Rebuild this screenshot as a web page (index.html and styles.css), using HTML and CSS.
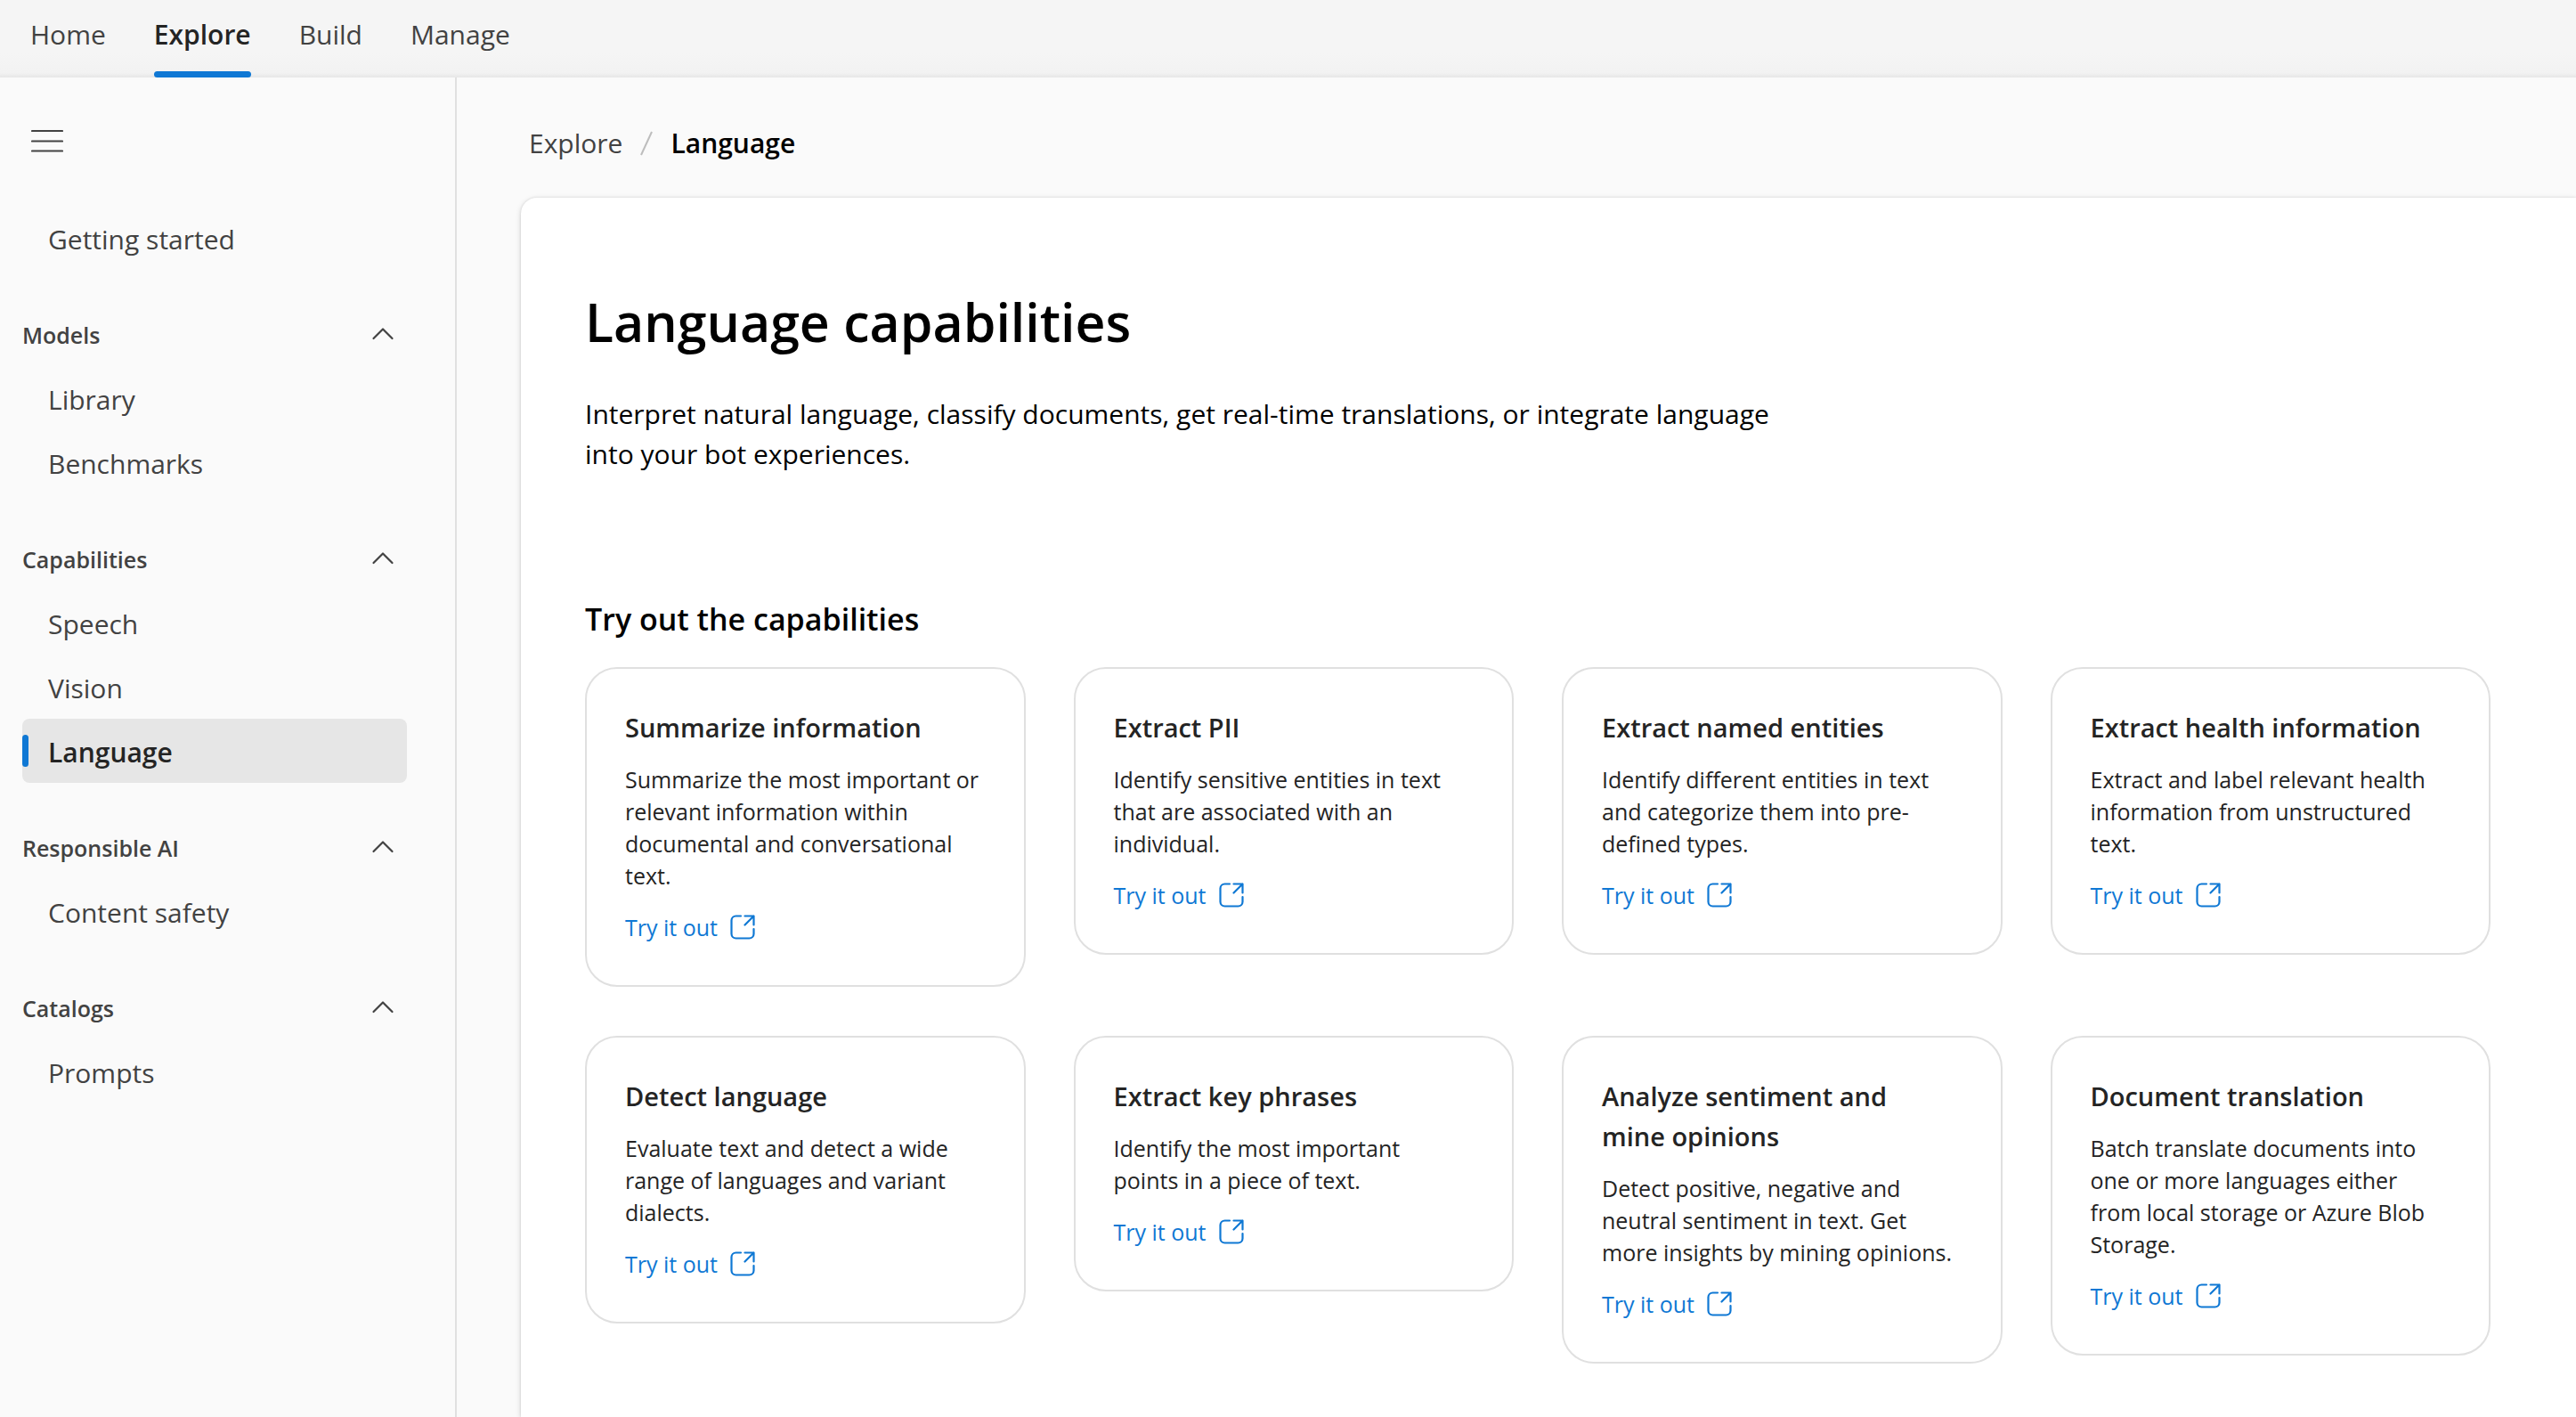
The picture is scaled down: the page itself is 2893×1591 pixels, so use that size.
FILE: index.html
```
<!DOCTYPE html>
<html lang="en">
<head>
<meta charset="utf-8">
<meta name="viewport" content="width=device-width, initial-scale=1">
<title>Language capabilities</title>
<link rel="stylesheet" href="styles.css">
</head>
<body>
<svg class="sprite" aria-hidden="true">
  <symbol id="chevron" viewBox="0 0 36 36"><path d="M7.5 23 18 12.5 28.500 23" fill="none" stroke="currentColor" stroke-width="2.200" stroke-linecap="round" stroke-linejoin="round"/></symbol>
  <symbol id="open" viewBox="0 0 28 28"><path d="M12 1.500H6.500a5 5 0 0 0-5 5v15a5 5 0 0 0 5 5h15a5 5 0 0 0 5-5V16M16.500 1.500h10v10M26.500 1.500l-10 10" fill="none" stroke="currentColor" stroke-width="2.200" stroke-linecap="round" stroke-linejoin="round"/></symbol>
</svg>

<header class="topbar">
  <nav class="topnav" aria-label="Primary">
    <a class="topnav-link" href="#home">Home</a>
    <a class="topnav-link is-active" href="#explore" aria-current="page">Explore</a>
    <a class="topnav-link" href="#build">Build</a>
    <a class="topnav-link" href="#manage">Manage</a>
  </nav>
</header>

<div class="layout">
  <aside class="sidebar">
    <button class="menu-button" type="button" aria-label="Collapse navigation">
      <svg class="menu-icon" viewBox="0 0 36 36" aria-hidden="true"><path d="M1 7h34M1 18.500h34M1 29.500h34" fill="none" stroke="currentColor" stroke-width="2.200" stroke-linecap="round"/></svg>
    </button>
    <nav class="sidenav" aria-label="Explore">
      <div class="group">
        <a class="item" href="#getting-started">Getting started</a>
      </div>
      <div class="group">
        <button class="group-head" type="button" aria-expanded="true"><span>Models</span><svg class="chevron"><use href="#chevron"/></svg></button>
        <a class="item" href="#library">Library</a>
        <a class="item" href="#benchmarks">Benchmarks</a>
      </div>
      <div class="group">
        <button class="group-head" type="button" aria-expanded="true"><span>Capabilities</span><svg class="chevron"><use href="#chevron"/></svg></button>
        <a class="item" href="#speech">Speech</a>
        <a class="item" href="#vision">Vision</a>
        <a class="item is-selected" href="#language" aria-current="page">Language</a>
      </div>
      <div class="group">
        <button class="group-head" type="button" aria-expanded="true"><span>Responsible AI</span><svg class="chevron"><use href="#chevron"/></svg></button>
        <a class="item" href="#content-safety">Content safety</a>
      </div>
      <div class="group">
        <button class="group-head" type="button" aria-expanded="true"><span>Catalogs</span><svg class="chevron"><use href="#chevron"/></svg></button>
        <a class="item" href="#prompts">Prompts</a>
      </div>
    </nav>
  </aside>

  <main class="main">
    <nav class="breadcrumb" aria-label="Breadcrumb">
      <a class="crumb" href="#explore">Explore</a>
      <svg class="crumb-divider" viewBox="0 0 14 28" aria-hidden="true"><path d="M1 27 13 1" stroke="currentColor" stroke-width="2"/></svg>
      <span class="crumb-current" aria-current="page">Language</span>
    </nav>

    <div class="panel">
      <h1 class="title">Language capabilities</h1>
      <p class="intro">Interpret natural language, classify documents, get real-time translations, or integrate language into your bot experiences.</p>
      <h2 class="subtitle">Try out the capabilities</h2>
      <div class="cards">
        <article class="card">
          <h3 class="card-title">Summarize information</h3>
          <p class="card-text">Summarize the most important or relevant information within documental and conversational text.</p>
          <a class="card-link" href="#summarize">Try it out<svg class="open-icon"><use href="#open"/></svg></a>
        </article>
        <article class="card">
          <h3 class="card-title">Extract PII</h3>
          <p class="card-text">Identify sensitive entities in text that are associated with an individual.</p>
          <a class="card-link" href="#pii">Try it out<svg class="open-icon"><use href="#open"/></svg></a>
        </article>
        <article class="card">
          <h3 class="card-title">Extract named entities</h3>
          <p class="card-text">Identify different entities in text and categorize them into pre-defined types.</p>
          <a class="card-link" href="#entities">Try it out<svg class="open-icon"><use href="#open"/></svg></a>
        </article>
        <article class="card">
          <h3 class="card-title">Extract health information</h3>
          <p class="card-text">Extract and label relevant health information from unstructured text.</p>
          <a class="card-link" href="#health">Try it out<svg class="open-icon"><use href="#open"/></svg></a>
        </article>
        <article class="card">
          <h3 class="card-title">Detect language</h3>
          <p class="card-text">Evaluate text and detect a wide range of languages and variant dialects.</p>
          <a class="card-link" href="#detect">Try it out<svg class="open-icon"><use href="#open"/></svg></a>
        </article>
        <article class="card">
          <h3 class="card-title">Extract key phrases</h3>
          <p class="card-text">Identify the most important points in a piece of text.</p>
          <a class="card-link" href="#phrases">Try it out<svg class="open-icon"><use href="#open"/></svg></a>
        </article>
        <article class="card">
          <h3 class="card-title">Analyze sentiment and mine opinions</h3>
          <p class="card-text">Detect positive, negative and neutral sentiment in text. Get more insights by mining opinions.</p>
          <a class="card-link" href="#sentiment">Try it out<svg class="open-icon"><use href="#open"/></svg></a>
        </article>
        <article class="card">
          <h3 class="card-title">Document translation</h3>
          <p class="card-text">Batch translate documents into one or more languages either from local storage or Azure Blob Storage.</p>
          <a class="card-link" href="#translation">Try it out<svg class="open-icon"><use href="#open"/></svg></a>
        </article>
      </div>
    </div>
  </main>
</div>
</body>
</html>
```

FILE: styles.css
```
*, *::before, *::after { box-sizing: border-box; }

body {
  margin: 0;
  min-height: 100vh;
  display: flex;
  flex-direction: column;
  background: #fafafa;
  color: #242424;
  font-family: "Segoe UI", "Open Sans", "Noto Sans", sans-serif;
  font-size: 30px;
  line-height: 36px;
}

h1, h2, h3, p { margin: 0; }
a { color: inherit; text-decoration: none; }

button {
  border: 0;
  padding: 0;
  background: none;
  color: inherit;
  font: inherit;
  cursor: pointer;
}

.sprite { display: none; }

/* Top bar */
.topbar {
  background: linear-gradient(#f5f5f5 60px, #f2f2f2 82px, #e6e6e6);
}

.topnav {
  display: flex;
  gap: 54px;
  padding-left: 34px;
}

.topnav-link {
  position: relative;
  height: 87px;
  padding-top: 21px;
  color: #424242;
}

.topnav-link.is-active {
  color: #242424;
  font-weight: 600;
}

.topnav-link.is-active::after {
  content: "";
  position: absolute;
  left: 0;
  right: 0;
  bottom: 0;
  height: 7px;
  border-radius: 4px;
  background: #0f78d4;
}

.layout {
  flex: 1;
  display: flex;
}

/* Side navigation */
.sidebar {
  flex: none;
  width: 513px;
  padding: 53px 54px 36px 25px;
  border-right: 2px solid #e0e0e0;
  color: #424242;
}

.menu-button {
  display: block;
  margin: 0 0 55px 10px;
}

.menu-icon {
  display: block;
  width: 36px;
  height: 36px;
}

.sidenav {
  display: flex;
  flex-direction: column;
  gap: 36px;
}

.group {
  display: flex;
  flex-direction: column;
}

.group-head {
  display: flex;
  align-items: center;
  justify-content: space-between;
  height: 72px;
  padding-right: 9px;
  font-size: 25px;
  font-weight: 600;
}

.group-head span { padding-top: 2px; }

.chevron {
  width: 36px;
  height: 36px;
}

.item {
  position: relative;
  height: 72px;
  padding: 20px 29px 16px;
  border-radius: 8px;
}

.item.is-selected {
  background: #e6e6e6;
  color: #242424;
  font-weight: 600;
}

.item.is-selected::before {
  content: "";
  position: absolute;
  left: 0;
  top: 18px;
  width: 7px;
  height: 36px;
  border-radius: 4px;
  background: #0f78d4;
}

/* Content */
.main {
  flex: 1;
  min-width: 0;
  display: flex;
  flex-direction: column;
  padding: 56px 0 0 72px;
}

.breadcrumb {
  display: flex;
  align-items: center;
  gap: 20px;
  margin-bottom: 43px;
  padding-left: 9px;
}

.crumb { color: #424242; }

.crumb-divider {
  width: 14px;
  height: 28px;
  color: #bdbdbd;
}

.crumb-current {
  color: #000;
  font-weight: 600;
}

.panel {
  flex: 1;
  padding: 98px 96px 54px 72px;
  border-radius: 18px 0 0 0;
  background: #fff;
  box-shadow: 0 0 3px rgba(0, 0, 0, 0.12), 0 2px 7px rgba(0, 0, 0, 0.14);
  color: #000;
}

.title {
  font-size: 59px;
  line-height: 82px;
  font-weight: 600;
}

.intro {
  max-width: 1350px;
  margin-top: 40px;
  line-height: 45px;
}

.subtitle {
  margin-top: 138px;
  font-size: 34px;
  line-height: 50px;
  font-weight: 600;
}

.cards {
  display: grid;
  grid-template-columns: repeat(4, minmax(0, 1fr));
  align-items: start;
  gap: 55px 54px;
  margin-top: 29px;
}

.card {
  display: flex;
  flex-direction: column;
  padding: 43px 48px 47px 43px;
  border: 2px solid #e0e0e0;
  border-radius: 36px;
  color: #242424;
}

.card-title {
  padding-right: 8px;
  font-size: 29px;
  line-height: 45px;
  font-weight: 600;
}

.card-text {
  margin-top: 18px;
  font-size: 25px;
}

.card-link {
  display: flex;
  align-items: center;
  gap: 14px;
  margin-top: 22px;
  color: #0f78d4;
  font-size: 25px;
}

.open-icon {
  width: 28px;
  height: 28px;
}
```
